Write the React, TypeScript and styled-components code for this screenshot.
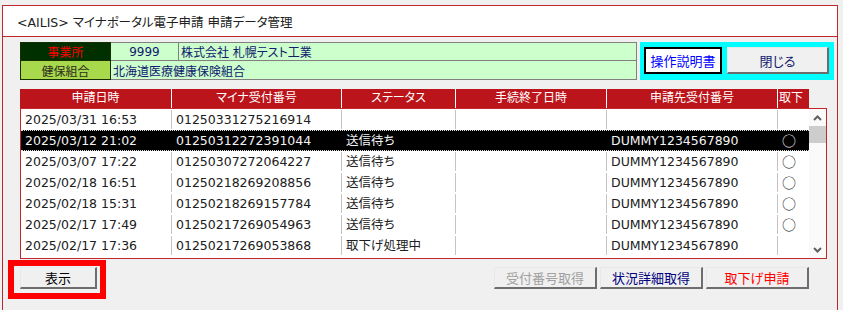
import styled, { createGlobalStyle } from "styled-components";

const GlobalStyle = createGlobalStyle`
  html, body {
    margin: 0;
    padding: 0;
    background: #f0f0f0;
  }
  body {
    font-family: "DejaVu Sans", "Noto Sans CJK JP", sans-serif;
    font-size: 12.5px;
    color: #202020;
    font-feature-settings: "palt";
  }
`;

const WINE = "#c0262c";

const Window = styled.div`
  margin: 5px 0 0 2px;
  width: 836px;
  height: 310px;
  box-sizing: border-box;
  border: 1px solid ${WINE};
  background: #f0f0f0;
`;

const TitleBar = styled.div`
  height: 31px;
  box-sizing: border-box;
  padding: 1px 0 0 14px;
  display: flex;
  align-items: center;
  background: #fff;
  border-bottom: 1px solid ${WINE};
  color: #202020;
`;

const Content = styled.div`
  padding: 5px 2px 0 17px;
`;

const InfoRow = styled.div`
  display: flex;
  gap: 3px;
`;

const InfoGrid = styled.div`
  display: grid;
  grid-template-columns: 91px 68px 458px;
  grid-template-rows: 19px 19px;
  font-size: 12px;
`;

const LabelCell = styled.div<{ $bg: string; $color: string; $top?: boolean }>`
  box-sizing: border-box;
  display: flex;
  align-items: center;
  justify-content: center;
  background: ${(p) => p.$bg};
  color: ${(p) => p.$color};
  border: 1px solid #173000;
  border-top-width: ${(p) => (p.$top ? "1px" : "0")};
`;

const ValueCell = styled.div<{ $center?: boolean; $span?: number; $top?: boolean }>`
  box-sizing: border-box;
  display: flex;
  align-items: center;
  justify-content: ${(p) => (p.$center ? "center" : "flex-start")};
  grid-column: span ${(p) => p.$span ?? 1};
  padding-left: ${(p) => (p.$center ? "0" : "2px")};
  background: #ccffcc;
  color: #10206e;
  border-right: 1px solid #808080;
  border-bottom: 1px solid #808080;
  border-top: ${(p) => (p.$top ? "1px solid #808080" : "none")};
  white-space: nowrap;
`;

const ActionBox = styled.div`
  width: 194px;
  height: 38px;
  box-sizing: border-box;
  padding: 5px 0 0 4px;
  display: flex;
  gap: 5px;
  background: #00ffff;
`;

const ManualButton = styled.button`
  width: 78px;
  height: 27px;
  box-sizing: border-box;
  padding: 0;
  background: #fff;
  border: 2px solid #000;
  color: #0000ff;
  font: inherit;
  font-size: 13px;
`;

const WinButton = styled.button<{ $w: number; $h?: number; $color?: string }>`
  width: ${(p) => p.$w}px;
  height: ${(p) => p.$h ?? 22}px;
  box-sizing: border-box;
  padding: 0;
  background: #f0f0f0;
  border-style: solid;
  border-width: 1px 2px 2px 1px;
  border-color: #e8e8e8 #6d6d6d #6d6d6d #e8e8e8;
  color: ${(p) => p.$color ?? "#000"};
  font: inherit;
  font-size: 13px;
`;

const Table = styled.div`
  margin-top: 9px;
`;

const HeaderRow = styled.div`
  display: grid;
  grid-template-columns: 152px 170px 114px 151px 171px 31px;
  width: 789px;
  height: 19px;
  background: #bb141a;
  color: #fff;
  font-size: 12px;
`;

const HeaderCell = styled.div<{ $last?: boolean }>`
  box-sizing: border-box;
  line-height: 19px;
  text-align: ${(p) => (p.$last ? "left" : "center")};
  padding-left: ${(p) => (p.$last ? "1px" : "0")};
  border-right: ${(p) => (p.$last ? "none" : "1px solid #fff")};
  white-space: nowrap;
`;

const Body = styled.div`
  display: flex;
  width: 807px;
  height: 151px;
  box-sizing: border-box;
  border: 1px solid ${WINE};
  background: #fff;
`;

const Rows = styled.div`
  width: 788px;
`;

const Row = styled.div<{ $selected?: boolean }>`
  display: grid;
  grid-template-columns: 151px 170px 114px 151px 171px 31px;
  height: 21px;
  box-sizing: border-box;
  background: ${(p) => (p.$selected ? "#000" : "transparent")};
  color: ${(p) => (p.$selected ? "#f2f2f2" : "#202020")};
  border-top: 1px dotted ${(p) => (p.$selected ? "#e0e0e0" : "transparent")};
  border-bottom: 1px dotted ${(p) => (p.$selected ? "#e0e0e0" : "transparent")};
`;

const Cell = styled.div<{ $selected?: boolean; $last?: boolean }>`
  box-sizing: border-box;
  padding-left: 4px;
  line-height: 19px;
  white-space: nowrap;
  overflow: hidden;
  border-right: ${(p) =>
    p.$last ? "none" : `1px solid ${p.$selected ? "#000" : "#c4c4c4"}`};
`;

const Mark = styled.span`
  font-family: "Noto Sans CJK JP", sans-serif;
  font-size: 14px;
`;

const ScrollBar = styled.div`
  width: 17px;
  display: flex;
  flex-direction: column;
  background: #fafafa;
`;

const ArrowBox = styled.div`
  height: 17px;
  display: flex;
  align-items: center;
  justify-content: center;
`;

const Thumb = styled.div`
  height: 17px;
  background: #cdcdcd;
`;

const Track = styled.div`
  flex: 1;
`;

const Footer = styled.div`
  width: 789px;
  margin-top: 8px;
  display: flex;
  justify-content: space-between;
`;

const Highlight = styled.div`
  position: relative;
  &::after {
    content: "";
    position: absolute;
    left: -12px;
    top: -7px;
    right: -9px;
    bottom: -10px;
    border: 6px solid #ff0000;
    pointer-events: none;
  }
`;

const ButtonGroup = styled.div`
  display: flex;
  gap: 3px;
`;

const headers = ["申請日時", "マイナ受付番号", "ステータス", "手続終了日時", "申請先受付番号", "取下"];

const rows = [
  { date: "2025/03/31 16:53", no: "01250331275216914", status: "", end: "", dest: "", mark: false },
  { date: "2025/03/12 21:02", no: "01250312272391044", status: "送信待ち", end: "", dest: "DUMMY1234567890", mark: true, selected: true },
  { date: "2025/03/07 17:22", no: "01250307272064227", status: "送信待ち", end: "", dest: "DUMMY1234567890", mark: true },
  { date: "2025/02/18 16:51", no: "01250218269208856", status: "送信待ち", end: "", dest: "DUMMY1234567890", mark: true },
  { date: "2025/02/18 15:31", no: "01250218269157784", status: "送信待ち", end: "", dest: "DUMMY1234567890", mark: true },
  { date: "2025/02/17 17:49", no: "01250217269054963", status: "送信待ち", end: "", dest: "DUMMY1234567890", mark: true },
  { date: "2025/02/17 17:36", no: "01250217269053868", status: "取下げ処理中", end: "", dest: "DUMMY1234567890", mark: false },
];

function Chevron({ up }: { up?: boolean }) {
  return (
    <svg width="9" height="6" viewBox="0 0 9 6">
      <path
        d={up ? "M1 5 L4.5 1.5 L8 5" : "M1 1 L4.5 4.5 L8 1"}
        fill="none"
        stroke="#606060"
        strokeWidth="2"
      />
    </svg>
  );
}

export default function App() {
  return (
    <>
      <GlobalStyle />
      <Window>
        <TitleBar>&lt;AILIS&gt; マイナポータル電子申請 申請データ管理</TitleBar>
        <Content>
          <InfoRow>
            <InfoGrid>
              <LabelCell $bg="#003000" $color="#ff0000" $top>
                事業所
              </LabelCell>
              <ValueCell $center $top>
                9999
              </ValueCell>
              <ValueCell $top>株式会社 札幌テスト工業</ValueCell>
              <LabelCell $bg="#a8d84c" $color="#2e2e1e">
                健保組合
              </LabelCell>
              <ValueCell $span={2}>北海道医療健康保険組合</ValueCell>
            </InfoGrid>
            <ActionBox>
              <ManualButton>操作説明書</ManualButton>
              <WinButton $w={102} $h={27} $color="#10206e">
                閉じる
              </WinButton>
            </ActionBox>
          </InfoRow>

          <Table>
            <HeaderRow>
              {headers.map((h, i) => (
                <HeaderCell key={h} $last={i === headers.length - 1}>
                  {h}
                </HeaderCell>
              ))}
            </HeaderRow>
            <Body>
              <Rows>
                {rows.map((r) => (
                  <Row key={r.no} $selected={r.selected}>
                    <Cell $selected={r.selected}>{r.date}</Cell>
                    <Cell $selected={r.selected}>{r.no}</Cell>
                    <Cell $selected={r.selected}>{r.status}</Cell>
                    <Cell $selected={r.selected}>{r.end}</Cell>
                    <Cell $selected={r.selected}>{r.dest}</Cell>
                    <Cell $selected={r.selected} $last>
                      {r.mark && <Mark>○</Mark>}
                    </Cell>
                  </Row>
                ))}
              </Rows>
              <ScrollBar>
                <ArrowBox>
                  <Chevron up />
                </ArrowBox>
                <Thumb />
                <Track />
                <ArrowBox>
                  <Chevron />
                </ArrowBox>
              </ScrollBar>
            </Body>
          </Table>

          <Footer>
            <Highlight>
              <WinButton $w={77}>表示</WinButton>
            </Highlight>
            <ButtonGroup>
              <WinButton $w={103} $color="#a0a0a0">
                受付番号取得
              </WinButton>
              <WinButton $w={103} $color="#000080">
                状況詳細取得
              </WinButton>
              <WinButton $w={103} $color="#ff0000">
                取下げ申請
              </WinButton>
            </ButtonGroup>
          </Footer>
        </Content>
      </Window>
    </>
  );
}
